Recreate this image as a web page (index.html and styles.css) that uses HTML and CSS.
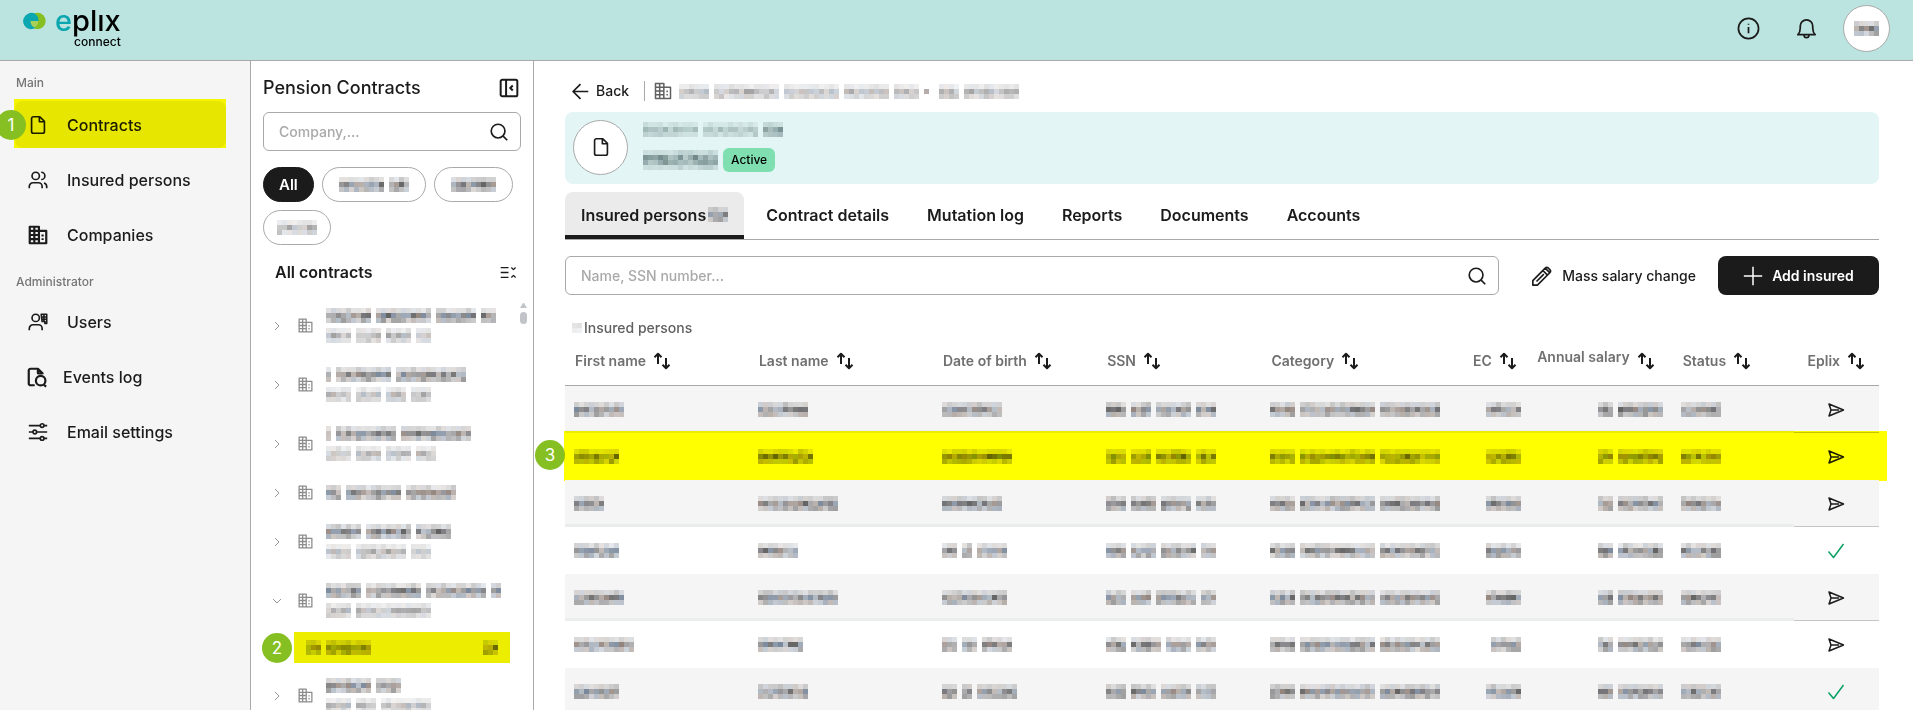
FILE: index.html
```html
<!DOCTYPE html>
<html lang="en">
<head>
    <meta charset="UTF-8">
    <meta name="viewport" content="width=device-width, initial-scale=1.0">
    <title>eplix connect - Pension Contracts</title>
    <link rel="stylesheet" href="styles.css">
</head>
<body>
    <svg class="sprite" aria-hidden="true">
        <symbol id="i-file" viewBox="0 0 24 24"><path d="M14 3H7a2 2 0 0 0-2 2v14a2 2 0 0 0 2 2h10a2 2 0 0 0 2-2V8zM13.500 3v5.500H19"/></symbol>
        <symbol id="i-persons" viewBox="0 0 24 24"><circle cx="9.500" cy="7.500" r="4"/><path d="M2.500 21v-2a4 4 0 0 1 4-4h6a4 4 0 0 1 4 4v2M15.500 3.500a4 4 0 0 1 0 8M18.500 15.200a4 4 0 0 1 3 3.800v2"/></symbol>
        <symbol id="i-building" viewBox="0 0 24 24"><path d="M3 3h10v18H3zM3 7.500h10M3 12h10M3 16.500h10M8 3v18M13 7.500h8V21h-8M17 11.500v2M17 15.500v2"/></symbol>
        <symbol id="i-user" viewBox="0 0 24 24"><circle cx="9.500" cy="7.500" r="4"/><path d="M2.500 21v-2a4 4 0 0 1 4-4h6a4 4 0 0 1 4 4v2M15.500 3.500h6v10h-2v-2h-3zM15.500 6.500h6M15.500 9h6M18.500 3.500v8"/></symbol>
        <symbol id="i-log" viewBox="0 0 24 24"><path d="M9.500 21H5a2 2 0 0 1-2-2V5a2 2 0 0 1 2-2h8l5 5v1M13 3v5h5M19.500 20.500l2.500 2"/><circle cx="16" cy="16" r="5.200"/></symbol>
        <symbol id="i-sliders" viewBox="0 0 24 24"><path d="M2 5h12.500M18.500 5H22M2 12h4.500M10.500 12H22M2 19h12.500M18.500 19H22"/><circle cx="16.500" cy="5" r="2"/><circle cx="8.500" cy="12" r="2"/><circle cx="16.500" cy="19" r="2"/></symbol>
        <symbol id="i-search" viewBox="0 0 24 24"><circle cx="11" cy="11" r="7.500"/><path d="M16.500 16.500L21 21"/></symbol>
        <symbol id="i-info" viewBox="0 0 24 24"><circle cx="12" cy="12" r="10.500"/><path d="M12 10.500V17M12 7v1"/></symbol>
        <symbol id="i-bell" viewBox="0 0 24 24"><path d="M3 18.500c2-2 2.500-4 2.500-7V9.500a6.500 6.500 0 0 1 13 0v2c0 3 .5 5 2.500 7zM9.500 19a2.500 2.500 0 0 0 5 0"/></symbol>
        <symbol id="i-collapse" viewBox="0 0 24 24"><rect x="2" y="2" width="20" height="20" rx="2"/><path d="M8.500 2v20M16.500 9L13.500 12l3 3"/></symbol>
        <symbol id="i-foldall" viewBox="0 0 24 24"><path d="M1 5h11M1 12h11M1 19h11M16 5l3 3 3-3M16 19l3-3 3 3"/></symbol>
        <symbol id="i-chevron" viewBox="0 0 24 24"><path d="M8 4l8 8-8 8"/></symbol>
        <symbol id="i-back" viewBox="0 0 24 24"><path d="M23 12H2M12 1.500L1.500 12 12 22.500"/></symbol>
        <symbol id="i-pencil" viewBox="0 0 24 24"><path d="M2 22v-5L15.500 3.500a2.500 2.500 0 0 1 3.500 0l1.500 1.500a2.500 2.500 0 0 1 0 3.500L7 22zM13 6l5 5M15.500 3.500l5 5M6 18L14 10"/></symbol>
        <symbol id="i-plus" viewBox="0 0 24 24"><path d="M12 1v22M1 12h22"/></symbol>
        <symbol id="i-sort" viewBox="0 0 18 18"><path d="M5 12V2M1.500 5.200L5 1.700l3.500 3.500M13 6v10M9.500 12.800L13 16.300l3.500-3.500"/></symbol>
        <symbol id="i-send" viewBox="0 0 18 18"><path d="M2 3l14.500 6L2 15l2-6zM4 9h8"/></symbol>
        <symbol id="i-check" viewBox="0 0 18 18"><path d="M1.500 9.500l5 6L16.500 2"/></symbol>
    </svg>

    <header class="topbar">
        <a class="logo" href="#" aria-label="eplix connect">
            <svg class="logo-mark" viewBox="0 0 24 18" aria-hidden="true">
                <circle class="mark-green" cx="15.500" cy="9" r="8.200"/>
                <path class="mark-teal" d="M13.500 2A8.200 8.200 0 1 0 8.300 17.200c2 .1 4-.5 5.200-1.400L8.500 9H16.500A8.200 8.200 0 0 0 13.500 2z"/>
                <path class="mark-pale" d="M8.500 9h8a8.200 8.200 0 0 1-4 6.600A7.500 7.500 0 0 1 8.500 9z"/>
            </svg>
            <span class="logo-text">
                <span class="logo-name"><span class="logo-e">e</span>plıx</span>
                <span class="logo-sub">connect</span>
            </span>
        </a>
        <div class="topbar-actions">
            <button type="button" class="icon-btn" aria-label="Information"><svg class="icon"><use href="#i-info"/></svg></button>
            <button type="button" class="icon-btn" aria-label="Notifications"><svg class="icon"><use href="#i-bell"/></svg></button>
            <button type="button" class="avatar" aria-label="Profile"><span class="redacted dark" data-words="25" data-rows="3"></span></button>
        </div>
    </header>

    <div class="layout">
        <nav class="sidebar">
            <h2 class="nav-title">Main</h2>
            <a class="nav-item active" href="#"><svg class="icon"><use href="#i-file"/></svg>Contracts<span class="step">1</span></a>
            <a class="nav-item" href="#"><svg class="icon"><use href="#i-persons"/></svg>Insured persons</a>
            <a class="nav-item" href="#"><svg class="icon bold"><use href="#i-building"/></svg>Companies</a>
            <h2 class="nav-title">Administrator</h2>
            <a class="nav-item" href="#"><svg class="icon"><use href="#i-user"/></svg>Users</a>
            <a class="nav-item narrow" href="#"><svg class="icon bold"><use href="#i-log"/></svg>Events log</a>
            <a class="nav-item" href="#"><svg class="icon"><use href="#i-sliders"/></svg>Email settings</a>
        </nav>

        <aside class="panel">
            <div class="panel-head">
                <h1>Pension Contracts</h1>
                <button type="button" class="icon-btn" aria-label="Collapse panel"><svg class="icon bold"><use href="#i-collapse"/></svg></button>
            </div>
            <label class="search">
                <input type="text" placeholder="Company,..." aria-label="Search company">
                <svg class="icon"><use href="#i-search"/></svg>
            </label>
            <div class="pills">
                <button type="button" class="pill selected">All</button>
                <button type="button" class="pill" aria-label="Filter"><span class="redacted dark" data-words="45 20" data-rows="3"></span></button>
                <button type="button" class="pill" aria-label="Filter"><span class="redacted dark" data-words="45" data-rows="3"></span></button>
                <button type="button" class="pill" aria-label="Filter"><span class="redacted" data-words="40" data-rows="3"></span></button>
            </div>
            <div class="tree-head">
                <h2>All contracts</h2>
                <button type="button" class="icon-btn" aria-label="Fold all"><svg class="icon"><use href="#i-foldall"/></svg></button>
            </div>
            <div class="tree-wrap">
                <ul class="tree" id="tree"></ul>
                <div class="scrollbar" aria-hidden="true"><span class="scroll-arrow"></span><span class="scroll-thumb"></span></div>
            </div>
        </aside>

        <main class="content">
            <div class="crumbs">
                <a class="back" href="#"><svg class="icon"><use href="#i-back"/></svg>Back</a>
                <svg class="icon crumb-icon"><use href="#i-building"/></svg>
                <span class="redacted" data-words="30 65 55 45 25" data-rows="3"></span>
                <span class="crumb-dot"></span>
                <span class="redacted" data-words="20 55" data-rows="3"></span>
            </div>

            <section class="banner">
                <span class="banner-icon"><svg class="icon"><use href="#i-file"/></svg></span>
                <div class="banner-text">
                    <span class="banner-line"><span class="redacted teal" data-words="55 55" data-rows="3"></span><span class="redacted teal dark" data-words="20" data-rows="3"></span></span>
                    <span class="banner-line"><span class="redacted teal dark" data-words="75" data-rows="4"></span><span class="status">Active</span></span>
                </div>
            </section>

            <nav class="tabs">
                <a class="tab active" href="#">Insured persons<span class="redacted dark" data-words="20" data-rows="3"></span></a>
                <a class="tab" href="#">Contract details</a>
                <a class="tab" href="#">Mutation log</a>
                <a class="tab" href="#">Reports</a>
                <a class="tab" href="#">Documents</a>
                <a class="tab" href="#">Accounts</a>
            </nav>

            <div class="toolbar">
                <label class="search">
                    <input type="text" placeholder="Name, SSN number..." aria-label="Search insured person">
                    <svg class="icon"><use href="#i-search"/></svg>
                </label>
                <button type="button" class="link-btn"><svg class="icon"><use href="#i-pencil"/></svg>Mass salary change</button>
                <button type="button" class="primary-btn"><svg class="icon"><use href="#i-plus"/></svg>Add insured</button>
            </div>

            <p class="count"><span class="redacted" data-words="10" data-rows="2"></span>Insured persons</p>

            <table class="persons">
                <thead>
                    <tr>
                        <th class="c-first"><button type="button" class="sort">First name<svg class="icon"><use href="#i-sort"/></svg></button></th>
                        <th class="c-last"><button type="button" class="sort">Last name<svg class="icon"><use href="#i-sort"/></svg></button></th>
                        <th class="c-birth"><button type="button" class="sort">Date of birth<svg class="icon"><use href="#i-sort"/></svg></button></th>
                        <th class="c-ssn"><button type="button" class="sort">SSN<svg class="icon"><use href="#i-sort"/></svg></button></th>
                        <th class="c-cat"><button type="button" class="sort">Category<svg class="icon"><use href="#i-sort"/></svg></button></th>
                        <th class="c-ec"><button type="button" class="sort">EC<svg class="icon"><use href="#i-sort"/></svg></button></th>
                        <th class="c-salary"><button type="button" class="sort top">Annual salary<svg class="icon"><use href="#i-sort"/></svg></button></th>
                        <th class="c-status"><button type="button" class="sort">Status<svg class="icon"><use href="#i-sort"/></svg></button></th>
                        <th class="c-eplix"><button type="button" class="sort">Eplix<svg class="icon"><use href="#i-sort"/></svg></button></th>
                    </tr>
                </thead>
                <tbody id="persons"></tbody>
            </table>
        </main>
    </div>

    <script src="script.js"></script>
</body>
</html>
```
FILE: styles.css
```css
* {
    box-sizing: border-box;
}
body {
    margin: 0;
    height: 100vh;
    display: flex;
    flex-direction: column;
    overflow: hidden;
    font-family: Inter, "Liberation Sans", sans-serif;
    font-weight: 500;
    font-size: 16px;
    color: #1b1b1b;
    background: #fff;
}
h1, h2, p, ul {
    margin: 0;
    padding: 0;
    font-weight: 500;
}
a {
    color: inherit;
    text-decoration: none;
}
button {
    font: inherit;
    color: inherit;
    background: none;
    border: none;
    padding: 0;
    cursor: pointer;
}
.sprite {
    display: none;
}
.icon {
    width: 22px;
    height: 22px;
    flex: none;
    fill: none;
    stroke: currentColor;
    stroke-width: 1.8;
    stroke-linejoin: round;
}
.icon.bold {
    stroke-width: 2.4;
}
.icon-btn {
    display: flex;
}
.redacted {
    display: inline-flex;
    flex: none;
}
.redacted svg {
    display: block;
}

/* Top bar */
.topbar {
    flex: none;
    display: flex;
    justify-content: space-between;
    align-items: center;
    height: 61px;
    padding: 0 23px 3px 22px;
    background: #bbe4e1;
    border-bottom: 1px solid #a9a9a9;
}
.logo {
    display: flex;
    gap: 9px;
}
.logo-mark {
    width: 24px;
    height: 18px;
    margin-top: 5px;
}
.mark-teal {
    fill: #0aa7b1;
}
.mark-green {
    fill: #86bf21;
}
.mark-pale {
    fill: #a9d05a;
}
.logo-text {
    display: flex;
    flex-direction: column;
    align-items: flex-end;
    padding-bottom: 2px;
    color: #000;
}
.logo-name {
    font-size: 29px;
    line-height: 28px;
}
.logo-e {
    color: #0aa7b1;
}
.logo-sub {
    font-size: 12px;
    line-height: 14px;
}
.topbar-actions {
    display: flex;
    align-items: center;
    gap: 35px;
}
.topbar-actions .icon {
    width: 23px;
    height: 23px;
}
.avatar {
    display: flex;
    align-items: center;
    justify-content: center;
    width: 47px;
    height: 47px;
    margin-left: -10px;
    background: #fff;
    border: 1px solid #a9a9a9;
    border-radius: 50%;
}

.layout {
    flex: 1;
    display: flex;
    min-height: 0;
}

/* Sidebar */
.sidebar {
    flex: none;
    width: 251px;
    padding: 12px 24px 0 15px;
    background: #f5f5f5;
    border-right: 1px solid #a9a9a9;
}
.nav-title {
    padding-left: 1px;
    font-size: 12px;
    line-height: 20px;
    color: #757575;
}
.nav-title:not(:first-child) {
    margin: 14px 0 6px;
}
.nav-item {
    position: relative;
    display: flex;
    align-items: center;
    gap: 18px;
    height: 47px;
    margin: 8px 0;
    padding-left: 12px;
    border-radius: 8px;
}
.nav-title + .nav-item {
    margin-top: 6px;
}
.nav-item.narrow {
    gap: 15px;
    padding-left: 11px;
}
.nav-item.active {
    margin-top: 8px;
    background: #e6e6e6;
}
.nav-item.active::before {
    content: "";
    position: absolute;
    inset: -2px 0 0 -1px;
    background: #ff0;
    mix-blend-mode: multiply;
}
.step {
    position: absolute;
    display: flex;
    align-items: center;
    justify-content: center;
    width: 30px;
    height: 30px;
    border-radius: 50%;
    background: #86bf21;
    color: #fff;
    font-size: 17px;
    font-weight: 400;
}
.nav-item .step {
    left: -19px;
}

/* Contracts panel */
.panel {
    flex: none;
    display: flex;
    flex-direction: column;
    width: 283px;
    padding: 14px 0 0 12px;
    border-right: 1px solid #a9a9a9;
    min-height: 0;
}
.panel-head {
    display: flex;
    justify-content: space-between;
    align-items: center;
    padding-right: 14px;
}
.panel-head h1 {
    font-size: 18px;
    line-height: 26px;
}
.panel-head .icon {
    width: 20px;
    height: 20px;
}
.search {
    display: flex;
    align-items: center;
    height: 39px;
    padding: 0 10px 0 15px;
    border: 1px solid #a9a9a9;
    border-radius: 6px;
}
.search input {
    flex: 1;
    min-width: 0;
    padding: 0;
    border: none;
    outline: none;
    background: none;
    font: inherit;
    font-size: 14px;
}
.search input::placeholder {
    color: #a9a9a9;
}
.panel .search {
    margin: 11px 12px 0 0;
}
.pills {
    display: flex;
    flex-wrap: wrap;
    gap: 8px;
    margin-top: 16px;
}
.pill {
    display: flex;
    align-items: center;
    height: 35px;
    padding: 0 16px;
    border: 1px solid #a9a9a9;
    border-radius: 18px;
    font-size: 15px;
}
.pill.selected {
    padding: 0 15px;
    background: #1b1b1b;
    border-color: #1b1b1b;
    color: #fff;
    font-weight: 600;
}
.pill:last-child {
    padding: 0 13px;
}
.tree-head {
    display: flex;
    justify-content: space-between;
    align-items: center;
    margin-top: 16px;
    padding: 0 16px 0 12px;
}
.tree-head h2 {
    font-size: 16px;
    font-weight: 600;
    line-height: 22px;
}
.tree-head .icon {
    width: 17px;
    height: 17px;
}
.tree-wrap {
    flex: 1;
    display: flex;
    justify-content: space-between;
    min-height: 0;
    margin-top: 13px;
    padding-right: 6px;
}
.tree {
    list-style: none;
}
.tree li {
    display: flex;
    align-items: center;
    height: 59px;
    color: #8c8c8c;
}
.tree li.single {
    height: 39px;
}
.tree .icon {
    width: 17px;
    height: 17px;
    margin-left: 14px;
}
.tree .chevron {
    width: 12px;
    height: 12px;
    margin-left: 8px;
}
.tree .open .chevron {
    transform: rotate(90deg);
}
.tree-name {
    display: flex;
    flex-direction: column;
    gap: 5px;
    margin-left: 12px;
}
.tree li.chosen {
    position: relative;
    justify-content: space-between;
    height: 31px;
    width: 216px;
    margin: 2px 0 3px 31px;
    padding: 0 12px;
    background: #ededed;
}
.tree li.chosen::after {
    content: "";
    position: absolute;
    inset: 0;
    background: #ff0;
    mix-blend-mode: multiply;
}
.chosen .step {
    left: -32px;
}
.scrollbar {
    display: flex;
    flex-direction: column;
    gap: 4px;
    width: 7px;
    padding-top: 7px;
}
.scroll-arrow {
    border: 3px solid transparent;
    border-top: none;
    border-bottom: 5px solid #c1c4c8;
}
.scroll-thumb {
    height: 12px;
    border-radius: 4px;
    background: #c1c4c8;
}

/* Main content */
.content {
    flex: 1;
    min-width: 0;
    padding: 15px 34px 0 31px;
    overflow: hidden;
}
.crumbs {
    display: flex;
    align-items: center;
    height: 30px;
    padding-left: 7px;
    font-size: 14px;
}
.back {
    display: flex;
    align-items: center;
    gap: 7px;
    padding-right: 15px;
    border-right: 1px solid #a9a9a9;
    line-height: 20px;
}
.back .icon {
    width: 17px;
    height: 17px;
    stroke-width: 2.4;
}
.crumb-icon {
    width: 20px;
    height: 20px;
    margin: 0 6px 0 8px;
    color: #606060;
}
.crumb-dot {
    width: 5px;
    height: 5px;
    margin: 0 10px 0 5px;
    background: #b5adaa;
}
.banner {
    display: flex;
    align-items: center;
    gap: 15px;
    height: 72px;
    margin-top: 6px;
    padding: 0 8px 2px;
    background: #e3f6f5;
    border-radius: 8px;
}
.banner-icon {
    display: flex;
    align-items: center;
    justify-content: center;
    width: 55px;
    height: 55px;
    border: 1px solid #a9a9a9;
    border-radius: 50%;
    background: #fff;
}
.banner-text {
    display: flex;
    flex-direction: column;
    gap: 11px;
}
.banner-line {
    display: flex;
    align-items: center;
    gap: 5px;
}
.status {
    padding: 0 8px;
    border-radius: 6px;
    background: #7fdfb0;
    color: #000;
    font-size: 12px;
    font-weight: 500;
    line-height: 24px;
}
.tabs {
    display: flex;
    gap: 6px;
    margin-top: 8px;
    border-bottom: 1px solid #a9a9a9;
}
.tab {
    display: flex;
    align-items: center;
    gap: 2px;
    height: 47px;
    padding: 2px 16px 0;
    border-bottom: 4px solid transparent;
    border-radius: 8px 8px 0 0;
    font-weight: 600;
}
.tab.active {
    background: linear-gradient(#1b1b1b, #1b1b1b) bottom / 100% 4px no-repeat border-box, #ebebeb;
}
.toolbar {
    display: flex;
    align-items: center;
    margin-top: 16px;
    font-size: 14px;
}
.toolbar .search {
    flex: 1;
}
.link-btn, .primary-btn {
    display: flex;
    align-items: center;
    gap: 9px;
    height: 39px;
}
.link-btn {
    padding: 0 22px 0 32px;
}
.primary-btn {
    justify-content: center;
    width: 161px;
    border-radius: 8px;
    background: #1b1b1b;
    color: #fff;
    font-weight: 600;
}
.primary-btn .icon {
    width: 20px;
    height: 20px;
}
.count {
    display: flex;
    align-items: center;
    gap: 2px;
    margin-top: 23px;
    padding-left: 7px;
    font-size: 14px;
    line-height: 20px;
    color: #606060;
}

/* Persons table */
.persons {
    width: 100%;
    table-layout: fixed;
    border-collapse: separate;
    border-spacing: 0;
}
.persons th {
    height: 48px;
    padding: 0 0 2px 10px;
    border-bottom: 1px solid #a9a9a9;
    text-align: left;
}
.sort {
    display: inline-flex;
    align-items: center;
    gap: 7px;
    color: #707070;
    font-size: 14px;
    font-weight: 600;
    line-height: 16px;
    vertical-align: middle;
    white-space: nowrap;
}
.sort.top {
    align-items: flex-start;
}
.sort .icon {
    width: 18px;
    height: 24px;
    color: #1b1b1b;
    stroke-width: 2;
}
.c-first, .c-last {
    width: 14%;
}
.c-birth, .c-ssn {
    width: 12.5%;
}
.c-cat {
    width: 15%;
}
.c-ec {
    width: 5.5%;
}
.c-salary {
    width: 10.5%;
}
.c-status {
    width: 9.5%;
}
.persons .c-ec, .persons .c-salary {
    padding-left: 0;
    padding-right: 14px;
    text-align: right;
}
.persons .c-status {
    padding-left: 14px;
}
.persons .c-eplix {
    padding-left: 0;
    text-align: center;
}
.persons td {
    height: 47px;
    padding: 0 9px;
    border-bottom: 3px solid transparent;
    vertical-align: middle;
}
.persons td .redacted {
    vertical-align: middle;
}
.persons td:nth-child(6) {
    padding-right: 10px;
    text-align: right;
}
.persons td:nth-child(7) {
    padding-right: 6px;
    text-align: right;
}
.persons td:nth-child(8) {
    padding-left: 12px;
}
.persons tbody tr {
    position: relative;
}
.persons tbody tr:nth-child(odd) {
    background: #f5f5f5;
}
.persons tbody tr:nth-child(odd) td {
    border-bottom-color: #ebeded;
}
.persons tbody td:last-child {
    padding: 0;
    border-bottom-width: 1px;
    text-align: center;
}
.persons tbody tr:nth-child(odd) td:last-child {
    border-bottom-color: #c4c6c6;
}
.persons td .icon {
    width: 18px;
    height: 18px;
    vertical-align: middle;
    stroke-width: 1.5;
}
.persons .i-check {
    color: #0a9f63;
}
.marked td:first-child::after {
    content: "";
    position: absolute;
    inset: -2px -8px -1px -1px;
    background: #ff0;
    mix-blend-mode: multiply;
}
.marked .step {
    left: -30px;
    top: 7px;
}
```
FILE: script.js
```javascript
const BLOCK = 5;
let seed = 7;

function random() {
    seed = (seed * 16807) % 2147483647;
    return seed / 2147483647;
}

// words: widths in pixels, separated by spaces
function mosaic(words, rows, dark, teal) {
    const widths = words.split(' ').map(Number);
    const tints = teal
        ? [[110, 135, 135], [130, 152, 152], [90, 115, 117]]
        : [[105, 105, 110], [140, 125, 118], [115, 130, 150], [90, 90, 90]];
    const levels = { 2: [0.4, 0.35], 3: [0.35, 0.95, 0.6], 4: [0.3, 0.9, 0.85, 0.3] }[rows];
    let x = 0;
    let rects = '';
    widths.forEach((width, i) => {
        if (i > 0) x += BLOCK;
        for (let c = 0; c < width; c += BLOCK) {
            for (let r = 0; r < rows; r++) {
                const tint = tints[Math.floor(random() * tints.length)];
                const alpha = levels[r] * (0.5 + random() * 0.5) * (dark ? 1 : 0.6);
                rects += `<rect x="${x + c}" y="${r * BLOCK}" width="${BLOCK}" height="${BLOCK}" fill="rgb(${tint})" fill-opacity="${alpha.toFixed(2)}"/>`;
            }
        }
        x += width;
    });
    return `<svg width="${x}" height="${rows * BLOCK}" shape-rendering="crispEdges" aria-hidden="true">${rects}</svg>`;
}

function redacted(words, rows, dark) {
    return `<span class="redacted${dark ? ' dark' : ''}" data-words="${words}" data-rows="${rows}"></span>`;
}

const contracts = [
    { name: '45 55 40 15', sub: '25 25 25 15' },
    { name: '5 55 70', sub: '25 25 20 20' },
    { name: '5 60 70', sub: '25 25 25 20' },
    { name: '15 55 50' },
    { name: '35 45 35', sub: '25 50 20' },
    { name: '35 55 60 10', sub: '25 75', open: true },
    { chosen: true },
    { name: '45 25', sub: '25 20 50' }
];

document.getElementById('tree').innerHTML = contracts.map(item => {
    if (item.chosen) {
        return `<li class="chosen">${redacted('15 45', 3, true)}${redacted('15', 3, true)}<span class="step">2</span></li>`;
    }
    return `<li class="${item.open ? 'open' : ''} ${item.sub ? '' : 'single'}">
        <svg class="icon chevron"><use href="#i-chevron"/></svg>
        <svg class="icon"><use href="#i-building"/></svg>
        <span class="tree-name">${redacted(item.name, 3, true)}${item.sub ? redacted(item.sub, 3) : ''}</span>
    </li>`;
}).join('');

const persons = [
    { cells: ['50', '50', '60', '20 20 35 20'], ec: '35', icon: 'send' },
    { cells: ['45', '55', '70', '20 20 35 20'], ec: '35', icon: 'send', marked: true },
    { cells: ['30', '80', '60', '20 25 30 20'], ec: '35', icon: 'send' },
    { cells: ['45', '40', '15 10 30', '20 25 35 15'], ec: '35', icon: 'check' },
    { cells: ['50', '80', '65', '20 20 40 15'], ec: '35', icon: 'send' },
    { cells: ['60', '45', '15 15 30', '20 30 25 20'], ec: '30', icon: 'send' },
    { cells: ['45', '50', '15 10 40', '20 25 30 20'], ec: '35', icon: 'check' }
];

document.getElementById('persons').innerHTML = persons.map(person => {
    const cells = [...person.cells, '25 75 60', person.ec, '15 45', '40'];
    const tds = cells.map((words, i) => {
        const step = person.marked && i === 0 ? '<span class="step">3</span>' : '';
        return `<td>${redacted(words, 3, true)}${step}</td>`;
    }).join('');
    return `<tr class="${person.marked ? 'marked' : ''}">${tds}<td><svg class="icon i-${person.icon}"><use href="#i-${person.icon}"/></svg></td></tr>`;
}).join('');

document.querySelectorAll('.redacted').forEach(el => {
    el.innerHTML = mosaic(el.dataset.words, Number(el.dataset.rows), el.classList.contains('dark'), el.classList.contains('teal'));
});
```
